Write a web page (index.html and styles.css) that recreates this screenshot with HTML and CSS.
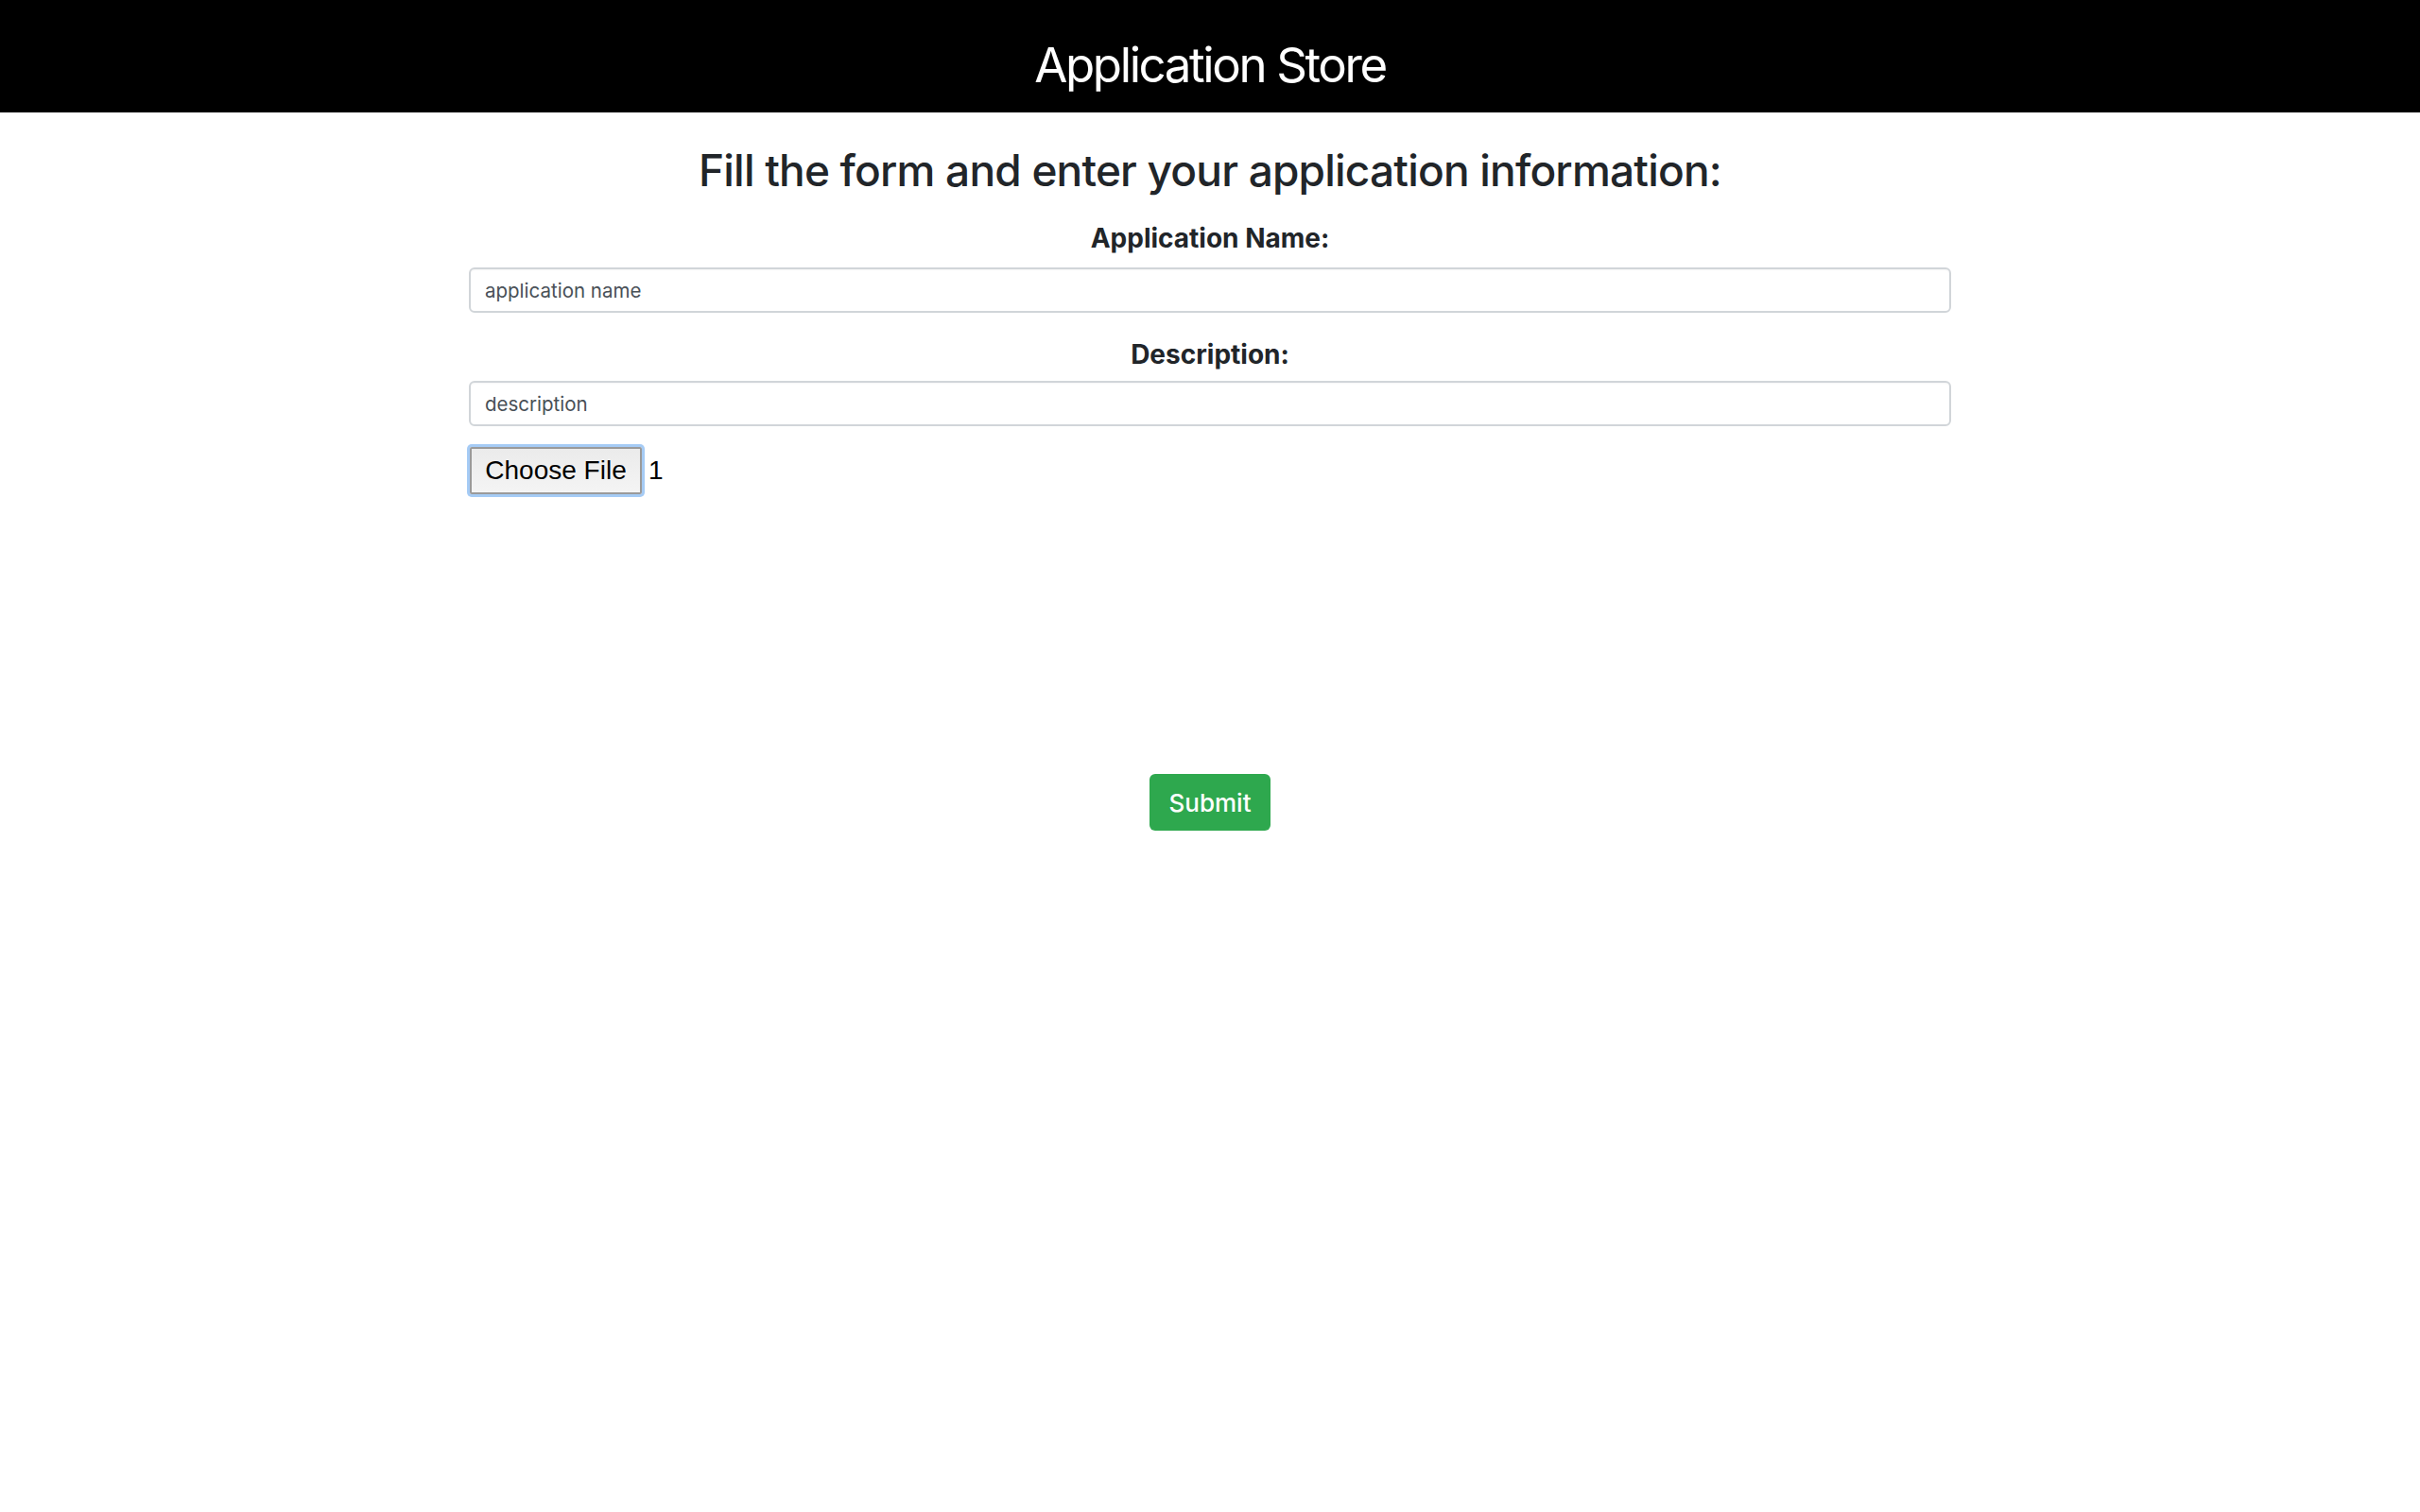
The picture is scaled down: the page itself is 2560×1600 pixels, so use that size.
FILE: index.html
```html
<!DOCTYPE html>
<html lang="en">
<head>
<meta charset="utf-8">
<title>Application Store</title>
<link rel="stylesheet" href="styles.css">
</head>
<body>
<header class="topbar">
  <h1 class="brand">Application Store</h1>
</header>
<main class="page">
  <h2 class="page-title">Fill the form and enter your application information:</h2>
  <form class="app-form">
    <label class="field-label" for="app-name">Application Name:</label>
    <div class="text-input" id="app-name">application name</div>
    <label class="field-label field-label-next" for="app-desc">Description:</label>
    <div class="text-input text-input-next" id="app-desc">description</div>
    <div class="file-row">
      <span class="file-button">Choose File</span>
      <span class="file-name">1</span>
    </div>
    <div class="submit-row">
      <span class="submit-button">Submit</span>
    </div>
  </form>
</main>
</body>
</html>
```

FILE: styles.css
```css
* { box-sizing: border-box; }
html, body {
  margin: 0;
  padding: 0;
  background: #ffffff;
  font-family: Inter, "Noto Sans", "Liberation Sans", sans-serif;
  color: #212529;
}
.topbar {
  height: 119px;
  padding-top: 18px;
  background: #000000;
  display: flex;
  align-items: center;
  justify-content: center;
}
.brand {
  margin: 0;
  font-size: 51px;
  font-weight: 400;
  color: #ffffff;
  line-height: 60px;
  letter-spacing: -2.4px;
}
.page {
  width: 1568px;
  margin: 0 auto;
}
.page-title {
  margin: 33px 0 0 0;
  font-size: 46px;
  line-height: 56px;
  font-weight: 500;
  text-align: center;
  letter-spacing: -0.8px;
  color: #212529;
}
.app-form {
  display: flex;
  flex-direction: column;
}
.field-label {
  display: block;
  text-align: center;
  font-size: 28px;
  line-height: 32px;
  font-weight: 700;
  margin-top: 28px;
  color: #212529;
}
.field-label-next { margin-top: 28px; }
.field-label + .text-input { margin-top: 15px; }
.field-label + .text-input-next { margin-top: 12px; }
.text-input {
  height: 48px;
  border: 2px solid #d1d5d9;
  border-radius: 6px;
  padding: 0 15px;
  display: flex;
  align-items: center;
  font-size: 20.5px;
  color: #495057;
  box-shadow: inset 0 1px 2px rgba(0,0,0,0.04);
}
.file-row {
  margin-top: 22px;
  display: flex;
  align-items: center;
  font-family: "Liberation Sans", Arial, sans-serif;
  font-size: 28px;
  color: #000;
}
.file-button {
  height: 50px;
  width: 182px;
  display: flex;
  align-items: center;
  justify-content: center;
  border: 2px solid #9a9a9a;
  border-radius: 2px;
  background: linear-gradient(#ebebeb, #f4f4f4);
  box-shadow: 0 0 0 3px #a5cbf5;
  margin-left: 1px;
}
.file-name {
  margin-left: 7px;
}
.submit-row {
  margin-top: 296px;
  display: flex;
  justify-content: center;
}
.submit-button {
  width: 128px;
  height: 60px;
  display: flex;
  align-items: center;
  justify-content: center;
  background: #2ea84e;
  border-radius: 6px;
  color: #ffffff;
  font-size: 26px;
  font-weight: 500;
}
```
